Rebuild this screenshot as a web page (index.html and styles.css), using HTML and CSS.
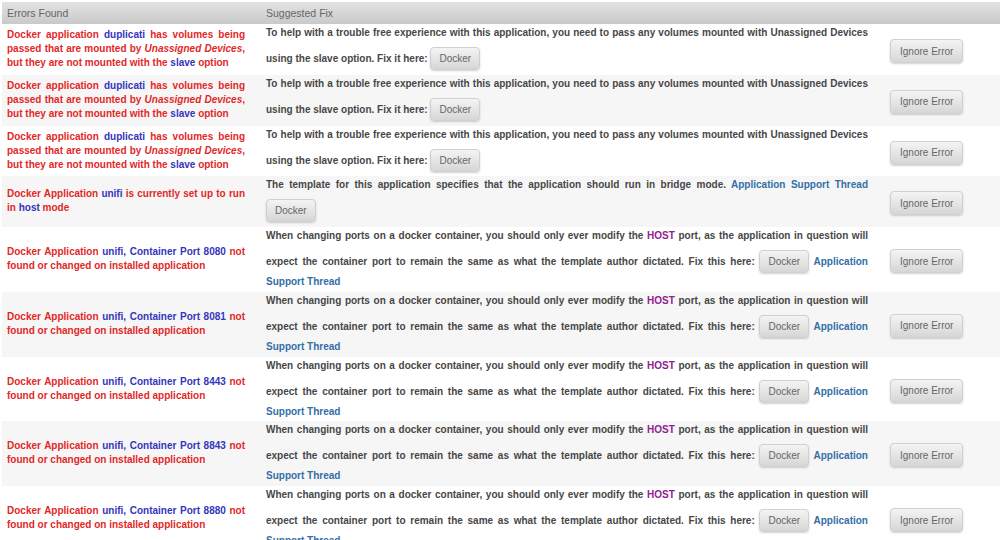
FILE: index.html
```html
<!DOCTYPE html>
<html lang="en">
<head>
  <meta charset="UTF-8">
  <title>Fix Common Problems</title>
  <link rel="stylesheet" href="styles.css">
</head>
<body>

<table class="errors">
  <colgroup>
    <col class="c-err">
    <col class="c-fix">
    <col class="c-act">
  </colgroup>
  <thead>
    <tr><th>Errors Found</th><th>Suggested Fix</th><th></th></tr>
  </thead>
  <tbody>
    <tr>
      <td class="err">Docker application <span class="app">duplicati</span> has volumes being passed that are mounted by <em>Unassigned Devices</em>, but they are not mounted with the <span class="app">slave</span> option</td>
      <td class="fix">To help with a trouble free experience with this application, you need to pass any volumes mounted with Unassigned Devices using the slave option. Fix it here: <button class="btn">Docker</button></td>
      <td class="act"><button class="btn ignore">Ignore Error</button></td>
    </tr>
    <tr>
      <td class="err">Docker application <span class="app">duplicati</span> has volumes being passed that are mounted by <em>Unassigned Devices</em>, but they are not mounted with the <span class="app">slave</span> option</td>
      <td class="fix">To help with a trouble free experience with this application, you need to pass any volumes mounted with Unassigned Devices using the slave option. Fix it here: <button class="btn">Docker</button></td>
      <td class="act"><button class="btn ignore">Ignore Error</button></td>
    </tr>
    <tr>
      <td class="err">Docker application <span class="app">duplicati</span> has volumes being passed that are mounted by <em>Unassigned Devices</em>, but they are not mounted with the <span class="app">slave</span> option</td>
      <td class="fix">To help with a trouble free experience with this application, you need to pass any volumes mounted with Unassigned Devices using the slave option. Fix it here: <button class="btn">Docker</button></td>
      <td class="act"><button class="btn ignore">Ignore Error</button></td>
    </tr>
    <tr>
      <td class="err">Docker Application <span class="app">unifi</span> is currently set up to run in <span class="app">host</span> mode</td>
      <td class="fix">The template for this application specifies that the application should run in bridge mode. <a href="#">Application Support Thread</a> <button class="btn">Docker</button></td>
      <td class="act"><button class="btn ignore">Ignore Error</button></td>
    </tr>
    <tr>
      <td class="err">Docker Application <span class="app">unifi, Container Port 8080</span> not found or changed on installed application</td>
      <td class="fix">When changing ports on a docker container, you should only ever modify the <span class="host">HOST</span> port, as the application in question will expect the container port to remain the same as what the template author dictated. Fix this here: <button class="btn">Docker</button> <a href="#">Application Support Thread</a></td>
      <td class="act"><button class="btn ignore">Ignore Error</button></td>
    </tr>
    <tr>
      <td class="err">Docker Application <span class="app">unifi, Container Port 8081</span> not found or changed on installed application</td>
      <td class="fix">When changing ports on a docker container, you should only ever modify the <span class="host">HOST</span> port, as the application in question will expect the container port to remain the same as what the template author dictated. Fix this here: <button class="btn">Docker</button> <a href="#">Application Support Thread</a></td>
      <td class="act"><button class="btn ignore">Ignore Error</button></td>
    </tr>
    <tr>
      <td class="err">Docker Application <span class="app">unifi, Container Port 8443</span> not found or changed on installed application</td>
      <td class="fix">When changing ports on a docker container, you should only ever modify the <span class="host">HOST</span> port, as the application in question will expect the container port to remain the same as what the template author dictated. Fix this here: <button class="btn">Docker</button> <a href="#">Application Support Thread</a></td>
      <td class="act"><button class="btn ignore">Ignore Error</button></td>
    </tr>
    <tr>
      <td class="err">Docker Application <span class="app">unifi, Container Port 8843</span> not found or changed on installed application</td>
      <td class="fix">When changing ports on a docker container, you should only ever modify the <span class="host">HOST</span> port, as the application in question will expect the container port to remain the same as what the template author dictated. Fix this here: <button class="btn">Docker</button> <a href="#">Application Support Thread</a></td>
      <td class="act"><button class="btn ignore">Ignore Error</button></td>
    </tr>
    <tr>
      <td class="err">Docker Application <span class="app">unifi, Container Port 8880</span> not found or changed on installed application</td>
      <td class="fix">When changing ports on a docker container, you should only ever modify the <span class="host">HOST</span> port, as the application in question will expect the container port to remain the same as what the template author dictated. Fix this here: <button class="btn">Docker</button> <a href="#">Application Support Thread</a></td>
      <td class="act"><button class="btn ignore">Ignore Error</button></td>
    </tr>
  </tbody>
</table>

</body>
</html>
```

FILE: styles.css
```css
body {
  margin: 0;
  padding: 2px 0 0 2px;
  background: #fff;
  font-family: 'Liberation Sans', Arial, sans-serif;
}

.errors {
  width: 998px;
  table-layout: fixed;
  border-collapse: collapse;
}

.c-err { width: 254px; }
.c-fix { width: 622px; }
.c-act { width: 122px; }

.errors th {
  height: 22px;
  padding: 0 10px;
  text-align: left;
  font-size: 10.5px;
  font-weight: normal;
  color: #666;
  background: linear-gradient(#e3e3e3, #c9c9c9);
}

.errors th:first-child {
  padding-left: 5px;
}

.errors td {
  padding: 2px 10px 2.75px;
  font-size: 10px;
  font-weight: bold;
  line-height: 14px;
  text-align: justify;
  vertical-align: middle;
}

.errors tbody tr:nth-child(even) {
  background: #f6f6f6;
}

.errors td.err {
  padding-left: 5px;
  padding-right: 11px;
  color: #e22828;
}

.err em {
  font-style: italic;
}

.app {
  color: #3535bd;
}

.errors td.fix {
  color: #474747;
}

.fix a {
  color: #336ea8;
  text-decoration: none;
}

.host {
  color: #8e2390;
}

.errors td.act {
  padding-left: 12px;
}

.btn {
  display: inline-block;
  height: 23px;
  margin: 7px 0 2px;
  padding: 0 8px;
  border: 1px solid #d0d0d0;
  border-radius: 4px;
  background: linear-gradient(#f4f4f4, #d6d6d6);
  box-shadow: 0 1px 2px rgba(0, 0, 0, 0.18);
  font-family: 'Liberation Sans', Arial, sans-serif;
  font-size: 10px;
  font-weight: normal;
  color: #666;
  cursor: pointer;
}

.btn.ignore {
  height: 24px;
  margin: 4px 0 0;
  padding: 0 9px;
  vertical-align: middle;
}
```
